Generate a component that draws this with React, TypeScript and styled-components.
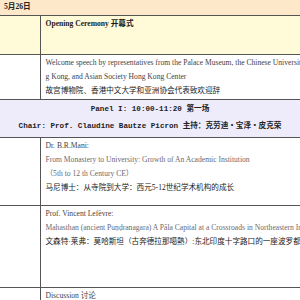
import React from 'react';
import styled, { createGlobalStyle } from 'styled-components';

const GlobalStyle = createGlobalStyle`
    html, body {
        margin: 0;
        padding: 0;
        background: #ffffff;
        overflow: hidden;
    }
    body {
        font-family: 'Liberation Serif', 'Noto Sans CJK SC', serif;
        font-size: 7.6px;
        color: #222;
    }
`;

const Page = styled.div`
    width: 300px;
    height: 300px;
    overflow: hidden;
`;

const DayHeader = styled.div`
    height: 15px;
    line-height: 14px;
    padding: 0 4px;
    background: #fde8c9;
    border-bottom: 1px solid #555;
    font-weight: 700;
    color: #222;
`;

const Schedule = styled.table`
    width: 396px;
    margin-left: -48px;
    border-collapse: collapse;
    table-layout: fixed;
`;

const Row = styled.tr`
    border-bottom: 1px solid #555;
`;

const TimeCell = styled.td<{ $tone?: 'plain' | 'open'; $h?: number }>`
    width: 88px;
    padding: 1px 4px 1px 6px;
    vertical-align: top;
    line-height: 14px;
    color: #5f9fd8;
    white-space: nowrap;
    border-right: 1px solid #555;
    background: ${({ $tone }) => ($tone === 'open' ? '#fffbd9' : '#fff')};
    height: ${({ $h }) => ($h ? `${$h}px` : 'auto')};
    box-sizing: border-box;
`;

const TalkCell = styled.td<{ $tone?: 'plain' | 'open' }>`
    padding: 1px 5px;
    vertical-align: top;
    line-height: 14px;
    white-space: nowrap;
    background: ${({ $tone }) => ($tone === 'open' ? '#fffbd9' : '#fff')};
`;

const PanelCell = styled.td`
    padding: 1px 4px 2px;
    text-align: center;
    background: #eeebfb;
    font-family: 'Liberation Mono', 'Noto Sans CJK SC', monospace;
    font-weight: 700;
    line-height: 17px;
    color: #222;
    white-space: nowrap;
`;

const Line = styled.div<{ $kind?: 'title' | 'name' | 'zh' | 'strong' }>`
    color: ${({ $kind }) =>
        $kind === 'title' ? '#6a6a72' : $kind === 'zh' ? '#1a1a1a' : $kind === 'strong' ? '#1a1a1a' : '#444'};
    font-weight: ${({ $kind }) => ($kind === 'strong' ? 700 : 400)};
`;

export default function App() {
    return (
        <Page>
            <GlobalStyle />
            <DayHeader>5月26日</DayHeader>
            <Schedule>
                <tbody>
                    <Row>
                        <TimeCell $tone="open" $h={38}>9:30-9:35</TimeCell>
                        <TalkCell $tone="open">
                            <Line $kind="strong">Opening Ceremony 开幕式</Line>
                        </TalkCell>
                    </Row>
                    <Row>
                        <TimeCell>9:35-9:50</TimeCell>
                        <TalkCell>
                            <Line>
                                Welcome speech by representatives from the Palace Museum, the Chinese University of Hon
                            </Line>
                            <Line>g Kong, and Asian Society Hong Kong Center</Line>
                            <Line $kind="zh">故宫博物院、香港中文大学和亚洲协会代表致欢迎辞</Line>
                        </TalkCell>
                    </Row>
                    <Row>
                        <PanelCell colSpan={2}>
                            <div>Panel I: 10:00-11:20 第一场</div>
                            <div>Chair: Prof. Claudine Bautze Picron 主持：克劳迪・宝泽・皮克荣</div>
                        </PanelCell>
                    </Row>
                    <Row>
                        <TimeCell $h={68}>10:00 - 10:40</TimeCell>
                        <TalkCell>
                            <Line>Dr. B.R.Mani:</Line>
                            <Line $kind="title">From Monastery to University: Growth of An Academic Institution</Line>
                            <Line $kind="title">（5th to 12 th Century CE）</Line>
                            <Line $kind="zh">马尼博士：从寺院到大学：西元5-12世纪学术机构的成长</Line>
                        </TalkCell>
                    </Row>
                    <Row>
                        <TimeCell $h={82}>10:40 - 11:10</TimeCell>
                        <TalkCell>
                            <Line>Prof. Vincent Lefèvre:</Line>
                            <Line $kind="title">
                                Mahasthan (ancient Puṇḍranagara) A Pāla Capital at a Crossroads in Northeastern India
                            </Line>
                            <Line $kind="zh">文森特·莱弗：莫哈斯坦（古奔德拉那噶熱）:东北印度十字路口的一座波罗都城</Line>
                        </TalkCell>
                    </Row>
                    <Row>
                        <TimeCell>11:10 - 11:20</TimeCell>
                        <TalkCell>
                            <Line>Discussion 讨论</Line>
                        </TalkCell>
                    </Row>
                </tbody>
            </Schedule>
        </Page>
    );
}
